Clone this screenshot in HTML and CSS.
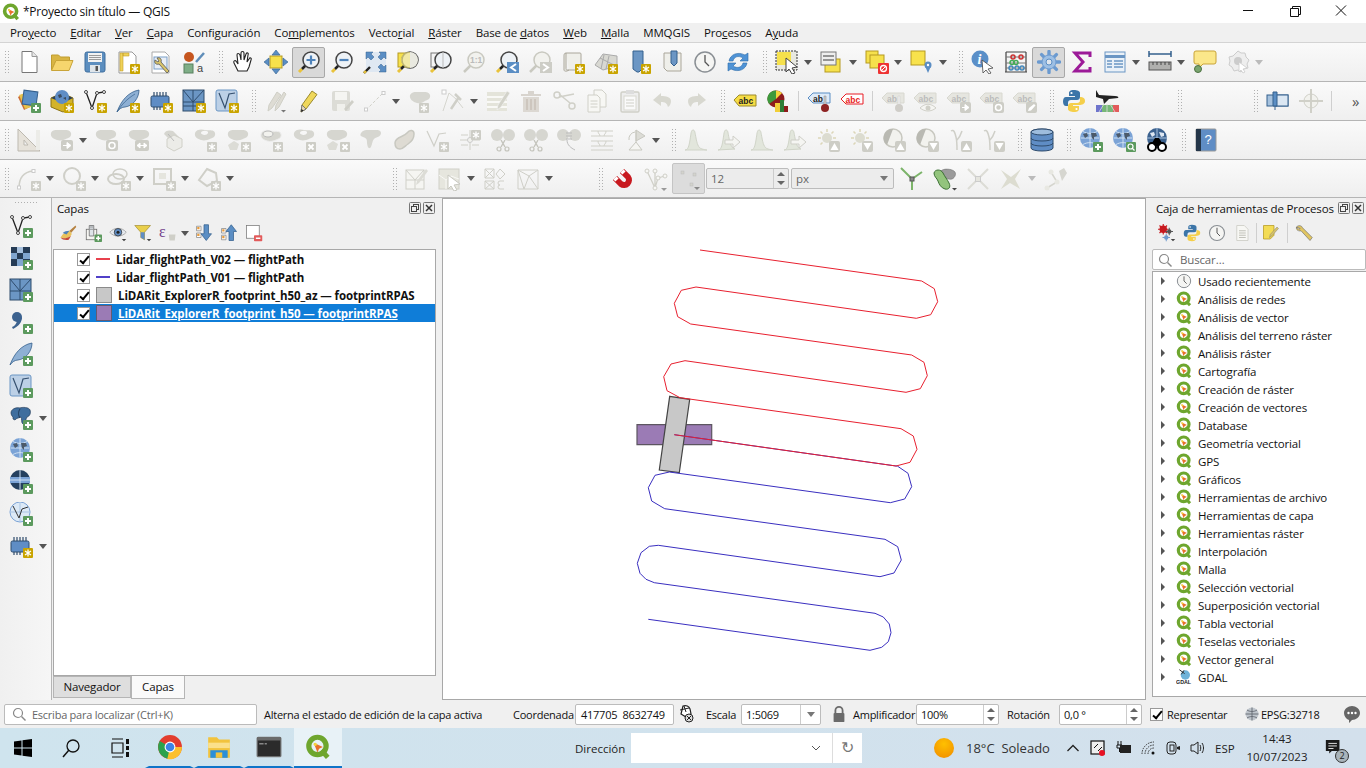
FILE: index.html
```html
<!DOCTYPE html>
<html lang="es">
<head>
    <meta charset="UTF-8">
    <title>*Proyecto sin título — QGIS</title>
    <link rel="stylesheet" href="styles.css">
</head>
<body>

<div class="titlebar">
    <svg class="logo"><use href="#q"/></svg>
    <span class="title">*Proyecto sin título — QGIS</span>
    <div class="winbtns">
        <svg viewBox="0 0 46 23"><path d="M17 10.5h10" stroke="#111"/></svg>
        <svg viewBox="0 0 46 23"><path d="M18.5 8.5h8v8h-8zM20.5 8.5v-2h8v8h-2" fill="none" stroke="#111"/></svg>
        <svg viewBox="0 0 46 23"><path d="M18 5.5l10 10M28 5.5l-10 10" stroke="#111"/></svg>
    </div>
</div>

<div class="menubar">
    <span>Pro<u>y</u>ecto</span>
    <span><u>E</u>ditar</span>
    <span><u>V</u>er</span>
    <span><u>C</u>apa</span>
    <span>Confi<u>g</u>uración</span>
    <span>Co<u>m</u>plementos</span>
    <span>Vecto<u>r</u>ial</span>
    <span><u>R</u>áster</span>
    <span>Base de <u>d</u>atos</span>
    <span><u>W</u>eb</span>
    <span><u>M</u>alla</span>
    <span>MMQGIS</span>
    <span>Pro<u>c</u>esos</span>
    <span>A<u>y</u>uda</span>
</div>

<div class="toolbar">
    <div class="hd first"></div>
    <div class="b"><svg class="ic"><use href="#new"/></svg></div>
    <div class="b"><svg class="ic"><use href="#open"/></svg></div>
    <div class="b"><svg class="ic"><use href="#save"/></svg></div>
    <div class="b"><svg class="ic"><use href="#saveas"/></svg></div>
    <div class="b"><svg class="ic"><use href="#props"/></svg></div>
    <div class="b"><svg class="ic" viewBox="0 0 24 24"><use href="#style"/><text class="it plain" x="15" y="22">a</text></svg></div>
    <div class="hd"></div>
    <div class="b"><svg class="ic"><use href="#hand"/></svg></div>
    <div class="b"><svg class="ic"><use href="#pansel"/></svg></div>
    <div class="b on"><svg class="ic"><use href="#zoomin"/></svg></div>
    <div class="b"><svg class="ic"><use href="#zoomout"/></svg></div>
    <div class="b"><svg class="ic"><use href="#zoomfull"/></svg></div>
    <div class="b"><svg class="ic"><use href="#zoomsel"/></svg></div>
    <div class="b"><svg class="ic"><use href="#zoomlayer"/></svg></div>
    <div class="b"><svg class="ic" viewBox="0 0 24 24"><use href="#zoomnat"/><text class="it g" x="8" y="13">1:1</text></svg></div>
    <div class="b"><svg class="ic"><use href="#zoomlast"/></svg></div>
    <div class="b"><svg class="ic"><use href="#zoomnext"/></svg></div>
    <div class="b"><svg class="ic"><use href="#mapview"/></svg></div>
    <div class="b"><svg class="ic"><use href="#map3d"/></svg></div>
    <div class="b"><svg class="ic"><use href="#booknew"/></svg></div>
    <div class="b"><svg class="ic"><use href="#books"/></svg></div>
    <div class="b"><svg class="ic"><use href="#clock"/></svg></div>
    <div class="b"><svg class="ic"><use href="#refresh"/></svg></div>
    <div class="hd"></div>
    <div class="b"><svg class="ic"><use href="#select"/></svg></div><div class="ar"></div>
    <div class="b"><svg class="ic"><use href="#selattr"/></svg></div><div class="ar"></div>
    <div class="b"><svg class="ic"><use href="#desel"/></svg></div><div class="ar"></div>
    <div class="b"><svg class="ic"><use href="#selpin"/></svg></div><div class="ar"></div>
    <div class="hd"></div>
    <div class="b"><svg class="ic" viewBox="0 0 24 24"><use href="#identify"/><text class="it info" x="6.500" y="14">i</text><use href="#cursor"/></svg></div>
    <div class="b"><svg class="ic"><use href="#abacus"/></svg></div>
    <div class="b on"><svg class="ic"><use href="#gear"/></svg></div>
    <div class="b"><svg class="ic"><use href="#sigma"/></svg></div>
    <div class="b"><svg class="ic"><use href="#table"/></svg></div><div class="ar"></div>
    <div class="b"><svg class="ic"><use href="#measure"/></svg></div><div class="ar"></div>
    <div class="b"><svg class="ic"><use href="#tip"/></svg></div>
    <div class="b"><svg class="ic"><use href="#action"/></svg></div><div class="ar off"></div>
</div>

<div class="toolbar">
    <div class="hd first"></div>
    <div class="b"><svg class="ic"><use href="#dsm"/></svg></div>
    <div class="b"><svg class="ic"><use href="#gpkg"/></svg></div>
    <div class="b"><svg class="ic"><use href="#vnew"/></svg></div>
    <div class="b"><svg class="ic"><use href="#feather"/></svg></div>
    <div class="b"><svg class="ic"><use href="#mesh"/></svg></div>
    <div class="b"><svg class="ic"><use href="#grid"/></svg></div>
    <div class="b"><svg class="ic"><use href="#virt"/></svg></div>
    <div class="hd"></div>
    <div class="b"><svg class="ic"><use href="#pencils"/></svg></div>
    <div class="b"><svg class="ic"><use href="#pencil"/></svg></div>
    <div class="b"><svg class="ic"><use href="#saveg"/></svg></div>
    <div class="b"><svg class="ic"><use href="#lineg"/></svg></div><div class="ar"></div>
    <div class="b"><svg class="ic"><use href="#blobstar"/></svg></div>
    <div class="b"><svg class="ic"><use href="#vtool"/></svg></div><div class="ar"></div>
    <div class="b"><svg class="ic"><use href="#tabedit"/></svg></div>
    <div class="b"><svg class="ic"><use href="#trash"/></svg></div>
    <div class="b"><svg class="ic"><use href="#cut"/></svg></div>
    <div class="b"><svg class="ic"><use href="#copy"/></svg></div>
    <div class="b"><svg class="ic"><use href="#paste"/></svg></div>
    <div class="b"><svg class="ic"><use href="#undo"/></svg></div>
    <div class="b"><svg class="ic"><use href="#redo"/></svg></div>
    <div class="hd"></div>
    <div class="b"><svg class="ic" viewBox="0 0 24 24"><use href="#abcy"/><text class="it" x="5.500" y="15">abc</text></svg></div>
    <div class="b"><svg class="ic"><use href="#pie"/></svg></div>
    <div class="sp"></div>
    <div class="b"><svg class="ic" viewBox="0 0 24 24"><use href="#abpin"/><text class="it" x="6" y="12.500">ab</text><use href="#pinbulb"/></svg></div>
    <div class="b"><svg class="ic" viewBox="0 0 24 24"><use href="#abcr"/><text class="it r" x="5.500" y="13.500">abc</text></svg></div>
    <div class="sp"></div>
    <div class="b"><svg class="ic" viewBox="0 0 24 24"><use href="#abg"/><text class="it g" x="6" y="12.500">ab</text><use href="#pinbulbg"/></svg></div>
    <div class="b"><svg class="ic" viewBox="0 0 24 24"><use href="#abcgrey"/><text class="it g" x="4.500" y="12.500">abc</text><use href="#abceye"/></svg></div>
    <div class="b"><svg class="ic" viewBox="0 0 24 24"><use href="#abcgrey"/><text class="it g" x="4.500" y="12.500">abc</text><use href="#abcmove"/></svg></div>
    <div class="b"><svg class="ic" viewBox="0 0 24 24"><use href="#abcgrey"/><text class="it g" x="4.500" y="12.500">abc</text><use href="#abcrot"/></svg></div>
    <div class="b"><svg class="ic" viewBox="0 0 24 24"><use href="#abcgrey"/><text class="it g" x="4.500" y="12.500">abc</text><use href="#abcedit"/></svg></div>
    <div class="hd"></div>
    <div class="b"><svg class="ic"><use href="#python"/></svg></div>
    <div class="b"><svg class="ic"><use href="#plane"/></svg></div>
    <div class="gap46"></div>
    <div class="hd"></div>
    <div class="gap60"></div>
    <div class="hd"></div>
    <div class="b"><svg class="ic"><use href="#pinlab"/></svg></div>
    <div class="b"><svg class="ic"><use href="#target"/></svg></div>
    <div class="sp"></div>
    <div class="more">»</div>
</div>

<div class="toolbar">
    <div class="hd first"></div>
    <div class="b"><svg class="ic"><use href="#ruler"/></svg></div>
    <div class="b"><svg class="ic"><use href="#blobarrow"/></svg></div><div class="ar"></div>
    <div class="b"><svg class="ic"><use href="#blobrot"/></svg></div>
    <div class="b"><svg class="ic"><use href="#blobsize"/></svg></div>
    <div class="b"><svg class="ic"><use href="#hexa"/></svg></div>
    <div class="b"><svg class="ic"><use href="#ringstar"/></svg></div>
    <div class="b"><svg class="ic"><use href="#twostar"/></svg></div>
    <div class="b"><svg class="ic"><use href="#ringstar2"/></svg></div>
    <div class="b"><svg class="ic"><use href="#ringx"/></svg></div>
    <div class="b"><svg class="ic"><use href="#twox"/></svg></div>
    <div class="b"><svg class="ic"><use href="#partial"/></svg></div>
    <div class="b"><svg class="ic"><use href="#smooth"/></svg></div>
    <div class="b"><svg class="ic"><use href="#vrot"/></svg></div>
    <div class="b"><svg class="ic"><use href="#offset"/></svg></div>
    <div class="b"><svg class="ic"><use href="#split"/></svg></div>
    <div class="b"><svg class="ic"><use href="#split"/></svg></div>
    <div class="b"><svg class="ic"><use href="#merge"/></svg></div>
    <div class="b"><svg class="ic"><use href="#lines"/></svg></div>
    <div class="b"><svg class="ic"><use href="#flag"/></svg></div><div class="ar"></div>
    <div class="hd"></div>
    <div class="b"><svg class="ic"><use href="#hist"/></svg></div>
    <div class="b"><svg class="ic"><use href="#histmove"/></svg></div>
    <div class="b"><svg class="ic"><use href="#hist"/></svg></div>
    <div class="b"><svg class="ic"><use href="#histmove"/></svg></div>
    <div class="b"><svg class="ic"><use href="#sunup"/></svg></div>
    <div class="b"><svg class="ic"><use href="#sundown"/></svg></div>
    <div class="b"><svg class="ic"><use href="#contup"/></svg></div>
    <div class="b"><svg class="ic"><use href="#contdown"/></svg></div>
    <div class="b"><svg class="ic"><use href="#gamup"/></svg></div>
    <div class="b"><svg class="ic"><use href="#gamdown"/></svg></div>
    <div class="hd"></div>
    <div class="b"><svg class="ic"><use href="#db"/></svg></div>
    <div class="hd"></div>
    <div class="b"><svg class="ic"><use href="#globeadd"/></svg></div>
    <div class="b"><svg class="ic"><use href="#globezoom"/></svg></div>
    <div class="b"><svg class="ic"><use href="#globebin"/></svg></div>
    <div class="hd"></div>
    <div class="b"><svg class="ic" viewBox="0 0 24 24"><use href="#help"/><text class="it q" x="10.500" y="16">?</text></svg></div>
</div>

<div class="toolbar last">
    <div class="hd first"></div>
    <div class="b"><svg class="ic"><use href="#arcstar"/></svg></div><div class="ar"></div>
    <div class="b"><svg class="ic"><use href="#circstar"/></svg></div><div class="ar"></div>
    <div class="b"><svg class="ic"><use href="#ellstar"/></svg></div><div class="ar"></div>
    <div class="b"><svg class="ic"><use href="#rectstar"/></svg></div><div class="ar"></div>
    <div class="b"><svg class="ic"><use href="#polystar"/></svg></div><div class="ar"></div>
    <div class="gap147"></div>
    <div class="hd"></div>
    <div class="b"><svg class="ic"><use href="#gridedit"/></svg></div>
    <div class="b"><svg class="ic"><use href="#gridsel"/></svg></div><div class="ar"></div>
    <div class="b"><svg class="ic"><use href="#quadsym"/></svg></div>
    <div class="b"><svg class="ic"><use href="#trimesh"/></svg></div><div class="ar"></div>
    <div class="gap34"></div>
    <div class="hd"></div>
    <div class="b"><svg class="ic"><use href="#magnet"/></svg></div>
    <div class="b"><svg class="ic"><use href="#snapv"/></svg></div>
    <div class="snapbtn"><svg class="ic"><use href="#dots"/></svg></div>
    <div class="spin w83 dim"><span class="val">12</span><span class="updown"></span></div>
    <div class="combo dim"><span class="val">px</span></div>
    <div class="b"><svg class="ic"><use href="#ygreen"/></svg></div>
    <div class="b"><svg class="ic"><use href="#blobgreen"/></svg></div>
    <div class="b"><svg class="ic"><use href="#crossg"/></svg></div>
    <div class="b"><svg class="ic"><use href="#crossg2"/></svg></div><div class="ar off"></div>
    <div class="b"><svg class="ic"><use href="#nodeg"/></svg></div>
</div>

<div class="main">
    <div class="lefttools">
        <div class="hdh"></div>
        <div class="lb"><svg class="ic"><use href="#vadd"/></svg></div>
        <div class="lb"><svg class="ic"><use href="#rasteradd"/></svg></div>
        <div class="lb"><svg class="ic"><use href="#gridadd"/></svg></div>
        <div class="lb"><svg class="ic"><use href="#commaadd"/></svg></div>
        <div class="lb"><svg class="ic"><use href="#featheradd"/></svg></div>
        <div class="lb"><svg class="ic"><use href="#virtadd"/></svg></div>
        <div class="lb"><svg class="ic"><use href="#pgadd"/></svg></div><div class="ar lar"></div>
        <div class="lb"><svg class="ic"><use href="#wmsadd"/></svg></div>
        <div class="lb"><svg class="ic"><use href="#wcsadd"/></svg></div>
        <div class="lb"><svg class="ic"><use href="#wfsadd"/></svg></div>
        <div class="lb"><svg class="ic"><use href="#mesh"/></svg></div><div class="ar lar"></div>
    </div>

    <div class="layers">
        <div class="dockhead">
            <span>Capas</span>
            <svg class="dockbtn"><use href="#dfloat"/></svg>
            <svg class="dockbtn"><use href="#dclose"/></svg>
        </div>
        <div class="docktools">
            <div class="sb"><svg class="ic"><use href="#brush"/></svg></div>
            <div class="sb"><svg class="ic"><use href="#groupadd"/></svg></div>
            <div class="sb"><svg class="ic"><use href="#eye"/></svg></div>
            <div class="sb"><svg class="ic"><use href="#filter"/></svg></div>
            <div class="sb"><svg class="ic" viewBox="0 0 24 24"><text class="it eps" x="0" y="17">ε</text><use href="#epsilon"/></svg></div><div class="ar sar"></div>
            <div class="sb"><svg class="ic"><use href="#expand"/></svg></div>
            <div class="sb"><svg class="ic"><use href="#collapse"/></svg></div>
            <div class="sb"><svg class="ic"><use href="#remove"/></svg></div>
        </div>
        <div class="tree">
            <div class="lrow"><span class="cb"></span><span class="sym line red"></span><span>Lidar_flightPath_V02 — flightPath</span></div>
            <div class="lrow"><span class="cb"></span><span class="sym line blue"></span><span>Lidar_flightPath_V01 — flightPath</span></div>
            <div class="lrow"><span class="cb"></span><span class="sym box grey"></span><span>LiDARit_ExplorerR_footprint_h50_az — footprintRPAS</span></div>
            <div class="lrow sel"><span class="cb"></span><span class="sym box purple"></span><span>LiDARit_ExplorerR_footprint_h50 — footprintRPAS</span></div>
        </div>
        <div class="tabs">
            <div class="tab">Navegador</div>
            <div class="tab cur">Capas</div>
        </div>
    </div>

    <div class="split"></div>

    <div class="canvas">
        <svg viewBox="443 199 702 500">
            <polygon points="637,424.7 711.7,424.7 711.7,444.7 637,444.7" fill="#9b7bb5" stroke="#5c5560" stroke-width="1.2"/>
            <polygon points="669.7,396.3 689.7,399.3 679.3,472.7 659.3,470" fill="#c8c8c8" stroke="#444" stroke-width="1.2"/>
            <polyline class="route" stroke="#3a2fc0" points="674.3,434.7 896,466 897.3,466 908,473.3 911.7,486.7 904.7,499 890.3,502.7 669.3,472 655,475.3 648.3,487.7 651.7,501 664.7,508.7 885,539.3 897.7,546.7 901.3,560 894,573 880,576.7 658.3,545.3 649.3,546.3 641,552.7 637.3,563.3 640,573.3 646,579.3 654.3,582.7 875,613.3 883.3,617 889.3,624 891,632.7 888.3,641.7 881.7,647.3 870,650.3 648.3,619.3"/>
            <polyline class="route" stroke="#e8202f" points="700,250 921.7,281 934.3,288.7 937.7,301.7 930.7,314.7 916.3,318.3 696,287 681.3,290.3 674.3,303.3 677.7,316.7 690.7,324 911.7,355 924,362.3 927.3,375.7 920.3,388.7 906,392.3 685,360.7 671,364 663.7,376.7 667,390.7 680,397.7 901,428.7 913.3,436 917,449.3 910,462.3 896,466 674.3,434.7"/>
        </svg>
    </div>

    <div class="split"></div>

    <div class="procs">
        <div class="dockhead">
            <span>Caja de herramientas de Procesos</span>
            <svg class="dockbtn"><use href="#dfloat"/></svg>
            <svg class="dockbtn"><use href="#dclose"/></svg>
        </div>
        <div class="docktools">
            <div class="sb"><svg class="ic"><use href="#models"/></svg></div>
            <div class="sb"><svg class="ic"><use href="#python"/></svg></div>
            <div class="sb"><svg class="ic"><use href="#clock"/></svg></div>
            <div class="sb"><svg class="ic"><use href="#doc"/></svg></div>
            <div class="sp narrow"></div>
            <div class="sb"><svg class="ic"><use href="#editflag"/></svg></div>
            <div class="sp"></div>
            <div class="sb"><svg class="ic"><use href="#wrench"/></svg></div>
        </div>
        <div class="search">
            <svg viewBox="0 0 14 14"><circle cx="6" cy="6" r="4.5" fill="none" stroke="#888" stroke-width="1.2"/><path d="M9.5 9.5l4 4" stroke="#888" stroke-width="1.4"/></svg>
            <span>Buscar…</span>
        </div>
        <div class="tree ptree">
            <div class="prow"><span class="tri"></span><svg class="pic"><use href="#clock"/></svg>Usado recientemente</div>
            <div class="prow"><span class="tri"></span><svg class="pic"><use href="#q"/></svg>Análisis de redes</div>
            <div class="prow"><span class="tri"></span><svg class="pic"><use href="#q"/></svg>Análisis de vector</div>
            <div class="prow"><span class="tri"></span><svg class="pic"><use href="#q"/></svg>Análisis del terreno ráster</div>
            <div class="prow"><span class="tri"></span><svg class="pic"><use href="#q"/></svg>Análisis ráster</div>
            <div class="prow"><span class="tri"></span><svg class="pic"><use href="#q"/></svg>Cartografía</div>
            <div class="prow"><span class="tri"></span><svg class="pic"><use href="#q"/></svg>Creación de ráster</div>
            <div class="prow"><span class="tri"></span><svg class="pic"><use href="#q"/></svg>Creación de vectores</div>
            <div class="prow"><span class="tri"></span><svg class="pic"><use href="#q"/></svg>Database</div>
            <div class="prow"><span class="tri"></span><svg class="pic"><use href="#q"/></svg>Geometría vectorial</div>
            <div class="prow"><span class="tri"></span><svg class="pic"><use href="#q"/></svg>GPS</div>
            <div class="prow"><span class="tri"></span><svg class="pic"><use href="#q"/></svg>Gráficos</div>
            <div class="prow"><span class="tri"></span><svg class="pic"><use href="#q"/></svg>Herramientas de archivo</div>
            <div class="prow"><span class="tri"></span><svg class="pic"><use href="#q"/></svg>Herramientas de capa</div>
            <div class="prow"><span class="tri"></span><svg class="pic"><use href="#q"/></svg>Herramientas ráster</div>
            <div class="prow"><span class="tri"></span><svg class="pic"><use href="#q"/></svg>Interpolación</div>
            <div class="prow"><span class="tri"></span><svg class="pic"><use href="#q"/></svg>Malla</div>
            <div class="prow"><span class="tri"></span><svg class="pic"><use href="#q"/></svg>Selección vectorial</div>
            <div class="prow"><span class="tri"></span><svg class="pic"><use href="#q"/></svg>Superposición vectorial</div>
            <div class="prow"><span class="tri"></span><svg class="pic"><use href="#q"/></svg>Tabla vectorial</div>
            <div class="prow"><span class="tri"></span><svg class="pic"><use href="#q"/></svg>Teselas vectoriales</div>
            <div class="prow"><span class="tri"></span><svg class="pic"><use href="#q"/></svg>Vector general</div>
            <div class="prow"><span class="tri"></span><svg class="pic" viewBox="0 0 24 24"><use href="#gdal"/><text class="it gd" x="0" y="22">GDAL</text></svg>GDAL</div>
        </div>
    </div>
</div>

<div class="statusbar">
    <div class="locator">
        <svg viewBox="0 0 14 14"><circle cx="6" cy="6" r="4.5" fill="none" stroke="#888" stroke-width="1.2"/><path d="M9.5 9.5l4 4" stroke="#888" stroke-width="1.4"/></svg>
        <span>Escriba para localizar (Ctrl+K)</span>
    </div>
    <span class="msg">Alterna el estado de edición de la capa activa</span>
    <span class="lab w62">Coordenada</span>
    <div class="field w99">417705&nbsp;&nbsp;8632749</div>
    <svg class="stic first-ic"><use href="#mouse"/></svg>
    <span class="lab w35">Escala</span>
    <div class="spin w80"><span class="val">1:5069</span><span class="drop"></span></div>
    <svg class="stic lock"><use href="#lock"/></svg>
    <span class="lab w63">Amplificador</span>
    <div class="spin w83"><span class="val">100%</span><span class="updown"></span></div>
    <span class="lab w52">Rotación</span>
    <div class="spin w83"><span class="val">0,0 °</span><span class="updown"></span></div>
    <span class="cb small"></span>
    <span class="lab w78">Representar</span>
    <svg class="stic globe"><use href="#wcsglobe"/></svg>
    <span class="lab w83px">EPSG:32718</span>
    <svg class="stic"><use href="#bubble"/></svg>
</div>

<div class="taskbar">
    <div class="tk w46"><svg class="tkic"><use href="#win"/></svg></div>
    <div class="tk w49"><svg class="tkic"><use href="#tsearch"/></svg></div>
    <div class="tk w50"><svg class="tkic"><use href="#taskview"/></svg></div>
    <div class="tk w49 run"><svg class="tkic big"><use href="#chrome"/></svg></div>
    <div class="tk w50 run"><svg class="tkic big"><use href="#explorer"/></svg></div>
    <div class="tk w50 run"><svg class="tkic big"><use href="#cmd"/></svg></div>
    <div class="tk w48 run active"><svg class="tkic big"><use href="#q"/></svg></div>
    <span class="addr">Dirección</span>
    <div class="addrbox">
        <svg class="chev" viewBox="0 0 10 6"><path d="M1 1l4 4 4-4" fill="none" stroke="#555"/></svg>
        <span class="addrgo">↻</span>
    </div>
    <div class="sun"></div>
    <span class="weather">18°C&nbsp;&nbsp;Soleado</span>
    <svg class="tray up" viewBox="0 0 14 14"><path d="M1.5 10l5.5-5.5 5.5 5.5" fill="none" stroke="#222" stroke-width="1.3"/></svg>
    <svg class="tray"><use href="#trayscreen"/></svg>
    <svg class="tray"><use href="#traybat"/></svg>
    <svg class="tray"><use href="#traywifi"/></svg>
    <svg class="tray"><use href="#traycam"/></svg>
    <svg class="tray"><use href="#traysnd"/></svg>
    <span class="lang">ESP</span>
    <div class="clock"><span>14:43</span><span>10/07/2023</span></div>
    <div class="notif"><svg viewBox="0 0 20 22"><path d="M1 1h16v13H8l-3 3v-3H1z" fill="#1a1a1a"/><path d="M4 5h10M4 8h10M4 11h6" stroke="#fff"/></svg><span class="count">2</span></div>
</div>

<svg class="sprite">
    <defs>
        <g id="bs"><rect x="14" y="14" width="10" height="10" rx="1" fill="#c9a400"/><path d="M19 15.5v7M16 17l6 4M22 17l-6 4" stroke="#fff" stroke-width="1.3"/></g>
        <g id="bg"><rect x="14" y="14" width="10" height="10" rx="1" fill="#cdcdc6"/><path d="M19 15.5v7M16 17l6 4M22 17l-6 4" stroke="#fff" stroke-width="1.3"/></g>
        <g id="bp"><rect x="14" y="14" width="10" height="10" rx="1" fill="#5c9a5e"/><path d="M19 16v6M16 19h6" stroke="#fff" stroke-width="2"/></g>
        <g id="bx"><rect x="14" y="14" width="10" height="10" rx="1" fill="#cdcdc6"/><path d="M16.500 16.500l5 5M21.500 16.500l-5 5" stroke="#fff" stroke-width="1.800"/></g>
        <path id="blob" d="M2 6c2-4 7-3 10-3s9-1 10 3-3 5-5 6-4 3-8 2-8-4-7-8z" fill="#d6d6d0"/>
        <g id="lensg"><path d="M2 22l7-7" stroke="#c9c9c0" stroke-width="2.500"/><circle cx="14" cy="10" r="8" fill="#f2f2ee" stroke="#c9c9c0" stroke-width="1.500"/></g>
        <g id="lens"><path d="M2 22l3-3" stroke="#e9c33b" stroke-width="3"/><path d="M5 19l4-4" stroke="#222" stroke-width="2.500"/><circle cx="14" cy="10" r="8" fill="#eef2f6" stroke="#444" stroke-width="1.500"/></g>
        <g id="globeb"><circle cx="11" cy="10" r="10" fill="#7ba3d6"/><path d="M1.500 10h19M11 0v20M4 3.500c4 2.500 10 2.500 14 0M4 16.500c4-2.500 10-2.500 14 0" stroke="#cfe0f2" fill="none"/><path d="M4 6l4-1 1 3-3 2zM12 5l5 0 1 3-3 1 0 3-2-2z" fill="#4c5a6a"/></g>
        <g id="blobwide"><path d="M1 5c1-4 7-3 10-3s9-1 10 3-3 5-5 6-6 2-9 1-7-3-6-7z" fill="#d6d6d0"/></g>
        <g id="sun"><circle cx="11" cy="10" r="5" fill="#dcdcd0"/><path d="M11 1v3M2 10h3M17 10h3M4.500 3.500l2 2M17.500 3.500l-2 2M4.500 16.500l2-2" stroke="#dcd6b8" stroke-width="1.500"/></g>
        <g id="cont"><circle cx="11" cy="10" r="9" fill="#f2f2ee" stroke="#c8c8c0" stroke-width="1.500"/><path d="M11 1a9 9 0 00-6 16z" fill="#b9b9b2"/></g>
        <g id="gam"><path d="M3 3c3-2 4 2 5 6s1 8 1 13M14 3c-1 3-3 7-5 9" fill="none" stroke="#cfcfc8" stroke-width="1.500"/></g>
    </defs>

    <symbol id="q" viewBox="0 0 24 24"><circle cx="11.500" cy="11" r="8" fill="none" stroke="#6ea62e" stroke-width="4.800"/><path d="M15 15l6 6.500" stroke="#6ea62e" stroke-width="4.500"/><path d="M8 8l8.500 4-3.500 1.500-1.500 3.500z" fill="#e8702a"/><circle cx="9.500" cy="9.500" r="1.500" fill="#f5d33c"/></symbol>

    <symbol id="new" viewBox="0 0 24 24"><path d="M5 1.500h10l5 5v16H5z" fill="#fff" stroke="#777"/><path d="M15 1.500v5h5" fill="#e8e8e8" stroke="#999"/></symbol>
    <symbol id="open" viewBox="0 0 24 24"><path d="M1.500 20V5h7l2 2h9v4H6z" fill="#d9b543" stroke="#c09d30"/><path d="M1.500 20.500h17.500l4-10H6z" fill="#f6d56d" stroke="#c9a438"/></symbol>
    <symbol id="save" viewBox="0 0 24 24"><rect x="2" y="2" width="20" height="20" rx="2" fill="#5c8ebf" stroke="#3f6e9e"/><rect x="5" y="3" width="14" height="9" fill="#f2f2f2"/><path d="M6 5.500h12M6 7.500h12M6 9.500h12" stroke="#9a9a9a"/><rect x="7" y="15" width="10" height="7" fill="#dfe5ea"/><rect x="12.500" y="16" width="2.500" height="5" fill="#555"/></symbol>
    <symbol id="saveas" viewBox="0 0 24 24"><path d="M3 2h13l4 4v17H3z" fill="#fff" stroke="#999"/><path d="M4 3h3v18H4zM7 3h6v3H7z" fill="#f0d258" stroke="#c29f2c" stroke-width=".6"/><use href="#bs"/></symbol>
    <symbol id="props" viewBox="0 0 24 24"><path d="M3 2h13l4 4v17H3z" fill="#fff" stroke="#aaa"/><rect x="5" y="7" width="13" height="12" fill="#e8eef6" stroke="#7b9fc8"/><path d="M8 8c3-1 5 1 4 4l8 9-2 2-8-9c-3 1-5-1-4-4l3 2 1-1z" fill="#d8c46a" stroke="#555" stroke-width=".8"/></symbol>
    <symbol id="style" viewBox="0 0 24 24"><circle cx="7" cy="7" r="5" fill="#c6561f"/><path d="M14 12l8-9" stroke="#5f8db9" stroke-width="2.500"/><rect x="2" y="14" width="9" height="9" fill="#7fae87" stroke="#59805f"/></symbol>
    <symbol id="hand" viewBox="0 0 24 24"><path d="M7 21l-4-8c-1-2 1-3 2-2l2 3-1-9c0-2 2-2 3 0l1 5 0-7c0-2 3-2 3 0v7l2-6c1-2 3-1 2 1l-1 7 2-3c1-2 3-1 2 1l-2 7-2 4z" fill="#fff" stroke="#222" stroke-width="1.100"/></symbol>
    <symbol id="pansel" viewBox="0 0 24 24"><rect x="6" y="6" width="12" height="12" fill="#f6e14c" stroke="#b59a20"/><path d="M12 0l4 5H8zM12 24l-4-5h8zM0 12l5-4v8zM24 12l-5 4V8z" fill="#5b8ec4" stroke="#34618f" stroke-width=".6"/></symbol>
    <symbol id="zoomin" viewBox="0 0 24 24"><use href="#lens"/><path d="M14 5.500v9M9.500 10h9" stroke="#4f83ba" stroke-width="2.200"/></symbol>
    <symbol id="zoomout" viewBox="0 0 24 24"><use href="#lens"/><path d="M9.500 10h9" stroke="#4f83ba" stroke-width="2.200"/></symbol>
    <symbol id="zoomfull" viewBox="0 0 24 24"><rect x="3" y="2" width="20" height="20" fill="#dfe8f2"/><path d="M3 2h7l-2 2 3 3-3 3-3-3-2 2zM23 2h-7l2 2-3 3 3 3 3-3 2 2zM23 22h-7l2-2-3-3 3-3 3 3 2-2z" fill="#5b8ec4" stroke="#34618f" stroke-width=".5"/><path d="M1 23l6-6" stroke="#222" stroke-width="2.400"/><path d="M1 23l2-2" stroke="#e9c33b" stroke-width="2.400"/></symbol>
    <symbol id="zoomsel" viewBox="0 0 24 24"><rect x="2" y="3" width="14" height="14" fill="#f6e14c" stroke="#b59a20"/><use href="#lens"/><path d="M14 2a8 8 0 010 16z" fill="#e9e9e0"/><path d="M5 11a8 8 0 0 0 9 7V2a8 8 0 0 0-9 9z" fill="#f2e685" fill-opacity=".7"/></symbol>
    <symbol id="zoomlayer" viewBox="0 0 24 24"><rect x="2" y="3" width="14" height="14" fill="#f4f4f4" stroke="#777"/><use href="#lens"/><path d="M14 2v16" stroke="#bbb"/></symbol>
    <symbol id="zoomnat" viewBox="0 0 24 24"><use href="#lensg"/></symbol>
    <symbol id="zoomlast" viewBox="0 0 24 24"><use href="#lens"/><rect x="12" y="12" width="12" height="11" fill="#5b8ec4"/><path d="M21 14l-5 3.500 5 3.500" fill="none" stroke="#fff" stroke-width="2"/></symbol>
    <symbol id="zoomnext" viewBox="0 0 24 24"><use href="#lensg"/><rect x="12" y="12" width="12" height="11" fill="#cdcdc6"/><path d="M15 14l5 3.500-5 3.500" fill="none" stroke="#fff" stroke-width="2"/></symbol>
    <symbol id="mapview" viewBox="0 0 24 24"><path d="M5 3h14a1 1 0 011 1v16H8c-3 0-3 0-3-2zM5 3c-2 0-2 2-2 3v14c0 1 2 2 5 0" fill="#efefea" stroke="#aaa69a"/><use href="#bs"/></symbol>
    <symbol id="map3d" viewBox="0 0 24 24"><path d="M1 15l8-11 14 2v10L9 20z" fill="#d8d8d2" stroke="#aaa"/><path d="M6 8l14 7M10 5l-3 14M15 6l-3 13" stroke="#aaa" fill="none"/><use href="#bs"/></symbol>
    <symbol id="booknew" viewBox="0 0 24 24"><path d="M6 1h10v17l-4 4H10l-4-3z" fill="#6b96c4" stroke="#35608d"/><use href="#bs"/></symbol>
    <symbol id="books" viewBox="0 0 24 24"><path d="M4 3h17v18H7l-3-3z" fill="#efefea" stroke="#aaa69a"/><path d="M11 1h6v12l-3 3-3-3z" fill="#6b96c4" stroke="#35608d"/></symbol>
    <symbol id="clock" viewBox="0 0 24 24"><circle cx="12" cy="12" r="10" fill="#f5f5f3" stroke="#8a8f94" stroke-width="1.500"/><path d="M12 5v7l4 4" fill="none" stroke="#555" stroke-width="1.300"/></symbol>
    <symbol id="refresh" viewBox="0 0 24 24"><path d="M3 11C4 5 11 1 19 5l3-2v8h-8l3-3C12 5 8 7 7 11zM21 13c-1 6-8 10-16 6l-3 2v-8h8l-3 3c5 3 9 1 10-3z" fill="#4f93d6" stroke="#2e6ca8" stroke-width=".6"/></symbol>
    <symbol id="select" viewBox="0 0 24 24"><rect x="1" y="1" width="21" height="19" fill="#e8e8e0" stroke="#333" stroke-dasharray="2 1"/><rect x="2" y="2" width="14" height="13" fill="#f6e14c"/><path d="M11 8l11 9-5 1 3 5-3 1-3-5-3 3z" fill="#fff" stroke="#444"/></symbol>
    <symbol id="selattr" viewBox="0 0 24 24"><rect x="5" y="9" width="15" height="13" fill="#f6e14c" stroke="#b59a20"/><rect x="1" y="2" width="15" height="13" fill="#eee" stroke="#777"/><path d="M3 6h11M3 10h11" stroke="#777" stroke-width="1.500"/></symbol>
    <symbol id="desel" viewBox="0 0 24 24"><rect x="1" y="1" width="12" height="12" fill="#f6e14c" stroke="#b59a20"/><rect x="5" y="5" width="14" height="13" fill="#f6e14c" stroke="#b59a20"/><rect x="13" y="13" width="11" height="11" rx="1" fill="#e33"/><circle cx="18.500" cy="18.500" r="3" fill="none" stroke="#fff" stroke-width="1.300"/><path d="M16 21l5-5" stroke="#fff"/></symbol>
    <symbol id="selpin" viewBox="0 0 24 24"><rect x="1" y="1" width="14" height="14" fill="#f8e24c" stroke="#b59a20"/><circle cx="18" cy="15" r="3.500" fill="#5b8ec4"/><path d="M15 16l3 7 3-7" fill="#5b8ec4"/><circle cx="18" cy="15" r="1.200" fill="#fff"/></symbol>
    <symbol id="identify" viewBox="0 0 24 24"><circle cx="9" cy="9" r="8.500" fill="#5a8fc8"/></symbol>
    <symbol id="cursor" viewBox="0 0 24 24"><path d="M11 10l11 8-5 1 3 4-2 1-3-4-3 3z" fill="#fff" stroke="#444" stroke-width=".8"/></symbol>
    <symbol id="abacus" viewBox="0 0 24 24"><path d="M1 22h22M2 2v20M22 2v20M2 2h20" fill="none" stroke="#444" stroke-width="1.200"/><path d="M2 7h20M2 13h20M2 18h20" stroke="#777"/><circle cx="9" cy="7" r="2" fill="none" stroke="#c33" stroke-width="1.500"/><circle cx="17" cy="7" r="2" fill="none" stroke="#c33" stroke-width="1.500"/><circle cx="8" cy="12.500" r="2" fill="none" stroke="#4a5" stroke-width="1.500"/><circle cx="12" cy="12.500" r="2" fill="none" stroke="#4a5" stroke-width="1.500"/><circle cx="7" cy="18" r="2" fill="none" stroke="#48b" stroke-width="1.500"/><circle cx="13" cy="18" r="2" fill="none" stroke="#48b" stroke-width="1.500"/><circle cx="18" cy="18" r="2" fill="none" stroke="#48b" stroke-width="1.500"/></symbol>
    <symbol id="gear" viewBox="0 0 24 24"><path d="M12 1.500v4M12 18.500v4M1.500 12h4M18.500 12h4M4.600 4.600l3 3M16.400 16.400l3 3M19.400 4.600l-3 3M7.600 16.400l-3 3" stroke="#6b9ad0" stroke-width="3.400" stroke-linecap="round"/><circle cx="12" cy="12" r="7" fill="#9dbfe4" stroke="#6b9ad0"/><circle cx="12" cy="12" r="3" fill="#dfe6ee" stroke="#5b8ec4"/></symbol>
    <symbol id="sigma" viewBox="0 0 24 24"><path d="M20 7V3H5l8 9-8 9h15v-4" fill="none" stroke="#9c1a98" stroke-width="3"/></symbol>
    <symbol id="table" viewBox="0 0 24 24"><rect x="2" y="2" width="20" height="20" fill="#eaf1f8" stroke="#6b96c4"/><path d="M2 6.500h20" stroke="#6b96c4" stroke-width="3"/><path d="M4 11h5M11 11h9M4 14h5M11 14h9M4 17h5M11 17h9" stroke="#6b96c4" stroke-width="1.400"/></symbol>
    <symbol id="measure" viewBox="0 0 24 24"><path d="M1 4h22M1 1v6M23 1v6" stroke="#35608d" stroke-width="1.500"/><rect x="1" y="12" width="22" height="8" fill="#b0b0ae" stroke="#555"/><path d="M5 12v3M9 12v3M13 12v3M17 12v3M21 12v3" stroke="#444"/></symbol>
    <symbol id="tip" viewBox="0 0 24 24"><path d="M3 1h18a2 2 0 012 2v9a2 2 0 01-2 2H10l-4 4v-4H3a2 2 0 01-2-2V3a2 2 0 012-2z" fill="#fbe78a" stroke="#c9a438"/><circle cx="5" cy="19" r="3.500" fill="#7aa56f" stroke="#4b7040"/></symbol>
    <symbol id="action" viewBox="0 0 24 24"><path d="M12 1l3 2 4 0 1 4 3 3-2 4 1 4-4 1-3 3-3-2-4 1-2-4-3-2 1-4-1-4 4-1z" fill="#eee" stroke="#ccc"/><circle cx="12" cy="11" r="4" fill="#ccc"/><path d="M13 12l8 6-4 1 2 3-2 1-2-3-2 2z" fill="#fff" stroke="#ccc" stroke-width=".8"/></symbol>

    <symbol id="dsm" viewBox="0 0 24 24"><path d="M1 8l8-5 6 14-8 4z" fill="#cc6d36"/><path d="M2 6l10-3 5 14-9 3z" fill="#e8c24a"/><rect x="6" y="2" width="14" height="14" fill="#5b8ec4" stroke="#35608d" transform="rotate(8 13 9)"/><use href="#bp"/></symbol>
    <symbol id="gpkg" viewBox="0 0 24 24"><path d="M1 9l11-5 11 5v10l-10 4-12-5z" fill="#d3b32a" stroke="#8b7314"/><path d="M1 9l12 5 10-5-11-5z" fill="#2f4157"/><circle cx="12" cy="8" r="7" fill="#5f8dc5"/><path d="M8 6l3-1 1 3-3 1zM13 9l3-1v3z" fill="#3b4a5c"/><use href="#bs"/></symbol>
    <symbol id="vnew" viewBox="0 0 24 24"><path d="M3 3l6 16 5-15 7-1" fill="none" stroke="#222" stroke-width="1.300"/><g fill="#fff" stroke="#444"><circle cx="3" cy="3" r="1.500"/><circle cx="9" cy="19" r="1.500"/><circle cx="14" cy="4" r="1.500"/><circle cx="21" cy="3" r="1.500"/></g><use href="#bs"/></symbol>
    <symbol id="feather" viewBox="0 0 24 24"><path d="M1 23C5 12 12 3 23 1c0 8-6 16-14 17-3 0-6 2-8 5z" fill="#8eb0d4" stroke="#35608d" stroke-width=".8"/><path d="M1 23c5-8 10-13 18-18" stroke="#35608d" fill="none" stroke-width=".7"/><use href="#bs"/></symbol>
    <symbol id="mesh" viewBox="0 0 24 24"><rect x="2" y="7" width="18" height="11" rx="1.500" fill="#5f8dc5" stroke="#2f4c6d"/><path d="M5 3v4M8 3v4M11 3v4M14 3v4M17 3v4M5 18v3M8 18v3M11 18v3" stroke="#2f4c6d" stroke-width="1.200"/><use href="#bs"/></symbol>
    <symbol id="grid" viewBox="0 0 24 24"><rect x="1" y="1" width="21" height="21" fill="#6b96c4" stroke="#2f4c6d"/><path d="M1 13h21M11 13v9M1 1l10 12M11 13L22 1M11 1v12" stroke="#2f4c6d" fill="none"/><path d="M1 17h10M11 17h11" stroke="#2f4c6d"/><use href="#bs"/></symbol>
    <symbol id="virt" viewBox="0 0 24 24"><rect x="1" y="1" width="21" height="21" rx="2" fill="#bcd0e6" stroke="#6b96c4"/><path d="M4 4l6 15 4-14 6-1" fill="none" stroke="#35506f" stroke-width="1.200"/><use href="#bs"/></symbol>
    <symbol id="pencils" viewBox="0 0 24 24"><path d="M4 22l1-6L13 3l4 3-9 13zM11 22l1-6 8-13 2 2-7 13z" fill="#dedcd4" stroke="#cfcfc6"/><path d="M17 21h5l-2.500 2.500z" fill="#777"/></symbol>
    <symbol id="pencil" viewBox="0 0 24 24"><path d="M4 23l1-7L15 2l5 3.500L9 20z" fill="#efd75a" stroke="#9b8a2e"/><path d="M4 23l1-7 4 4z" fill="#e9d9b5" stroke="#777"/><path d="M4 23l.5-3 2 1.500z" fill="#222"/></symbol>
    <symbol id="saveg" viewBox="0 0 24 24"><rect x="2" y="2" width="18" height="20" rx="2" fill="#dcdcd6"/><rect x="5" y="3" width="12" height="8" fill="#f5f5f2"/><rect x="7" y="15" width="8" height="7" fill="#f0f0ec"/><path d="M14 20l8-9 2 2-8 9z" fill="#cfcfc8"/></symbol>
    <symbol id="lineg" viewBox="0 0 24 24"><path d="M3 21L20 4" stroke="#d0d0c8" stroke-dasharray="3 2"/><rect x="1.500" y="19" width="3" height="3" fill="#fff" stroke="#ccc"/><rect x="19" y="2.500" width="3" height="3" fill="#fff" stroke="#ccc"/></symbol>
    <symbol id="blobstar" viewBox="0 0 24 24"><use href="#blob"/><use href="#bg" x="-3"/></symbol>
    <symbol id="vtool" viewBox="0 0 24 24"><path d="M2 22l6-18 7 6 7 9" fill="none" stroke="#d5d5ce"/><rect x="1" y="1" width="4" height="4" fill="#fff" stroke="#ccc"/><path d="M10 20l8-12M14 5l6 6" stroke="#cfcfc8" stroke-width="2.500"/></symbol>
    <symbol id="tabedit" viewBox="0 0 24 24"><rect x="1" y="3" width="20" height="19" fill="#e4e4da"/><path d="M1 8h20M1 13h20M1 18h20" stroke="#fff" stroke-width="1.300"/><path d="M11 21l1-5L21 2l3 2-9 14z" fill="#d3d3ca" stroke="#f5f5f5" stroke-width=".6"/></symbol>
    <symbol id="trash" viewBox="0 0 24 24"><path d="M2 5h20v2H2zM9 2h6v3H9z" fill="#d8d4ce"/><path d="M4 8h16v15H4z" fill="#dcd8d2"/><path d="M8 10v11M12 10v11M16 10v11" stroke="#c8c0b8" stroke-width="1.500"/></symbol>
    <symbol id="cut" viewBox="0 0 24 24"><circle cx="5" cy="6" r="3" fill="none" stroke="#d0d0c8" stroke-width="1.500"/><circle cx="20" cy="17" r="3" fill="none" stroke="#d0d0c8" stroke-width="1.500"/><path d="M7 8l15-3M18 14L7 5" stroke="#d0d0c8" stroke-width="1.500"/></symbol>
    <symbol id="copy" viewBox="0 0 24 24"><path d="M9 1h8l4 4v13H9z" fill="#f7f7f4" stroke="#d0d0c8"/><path d="M3 6h9l3 3v14H3z" fill="#f7f7f4" stroke="#d0d0c8"/><path d="M5.500 12h7M5.500 15h7M5.500 18h7" stroke="#d0d0c8"/></symbol>
    <symbol id="doc" viewBox="0 0 24 24"><path d="M5 2h10l5 5v15H5z" fill="#f7f7f4" stroke="#c8c8c0"/><path d="M8 9h9M8 12h9M8 15h9M8 18h9" stroke="#c0c0b8" stroke-width="1.300"/></symbol>
    <symbol id="paste" viewBox="0 0 24 24"><rect x="3" y="3" width="18" height="20" rx="1.500" fill="#eee" stroke="#d0d0c8" stroke-width="1.500"/><path d="M8 1h8v4H8z" fill="#ddd"/><rect x="6" y="7" width="12" height="14" fill="#fafafa" stroke="#d8d8d0"/><path d="M8 11h8M8 14h8M8 17h8" stroke="#d0d0c8"/></symbol>
    <symbol id="undo" viewBox="0 0 24 24"><path d="M10 4L2 11l8 6v-4c4 0 6 1 7 5 2-1 3-4 3-6 0-4-5-5-10-5z" fill="#d8d8d0"/></symbol>
    <symbol id="redo" viewBox="0 0 24 24"><path d="M14 4l8 7-8 6v-4c-4 0-6 1-7 5-2-1-3-4-3-6 0-4 5-5 10-5z" fill="#d8d8d0"/></symbol>
    <symbol id="abcy" viewBox="0 0 24 24"><path d="M1 11l5-5h17v11H6z" fill="#f6dd45" stroke="#9b8a2e"/></symbol>
    <symbol id="pie" viewBox="0 0 24 24"><circle cx="10" cy="10" r="8.500" fill="#8e1b1b"/><path d="M10 10V1.500A8.500 8.500 0 003 15z" fill="#3c9a3c"/><path d="M10 10V1.500a8.500 8.500 0 016 2.500z" fill="#f3d53c"/><rect x="9" y="14" width="5" height="9" fill="#f1cf38"/><rect x="14" y="11" width="4" height="12" fill="#2f7d37"/><rect x="18" y="17" width="4" height="6" fill="#8e1b1b"/></symbol>
    <symbol id="abpin" viewBox="0 0 24 24"><path d="M1 9l5-5h17v10H6z" fill="#ddeaf8" stroke="#5b8ec4"/></symbol>
    <symbol id="pinbulb" viewBox="0 0 24 24"><path d="M17 7h2v9h-2z" fill="#ccc" stroke="#888" stroke-width=".5"/><circle cx="18" cy="19" r="4" fill="#8e2323"/></symbol>
    <symbol id="abcr" viewBox="0 0 24 24"><path d="M1 10l5-5h17v10H6z" fill="#fff" stroke="#e81d25"/></symbol>
    <symbol id="abg" viewBox="0 0 24 24"><path d="M1 9l5-5h17v10H6z" fill="#e6e6e0" stroke="#d8d8d0"/></symbol>
    <symbol id="pinbulbg" viewBox="0 0 24 24"><path d="M17 7h2v9h-2z" fill="#eee" stroke="#ccc" stroke-width=".5"/><circle cx="18" cy="19" r="4" fill="#cfcdc8"/></symbol>
    <symbol id="abcgrey" viewBox="0 0 24 24"><path d="M0 9l5-5h17v10H5z" fill="#e6e6e0" stroke="#d8d8d0"/></symbol>
    <symbol id="abceye" viewBox="0 0 24 24"><path d="M6 19c5-5 11-5 16 0-5 4-11 4-16 0z" fill="#f5f5f2" stroke="#d0d0c8"/><circle cx="14" cy="19" r="2.500" fill="#d0d0c8"/></symbol>
    <symbol id="abcmove" viewBox="0 0 24 24"><rect x="13" y="13" width="11" height="11" rx="2" fill="#cdcdc6"/><path d="M15 18.500h3v-3l4 3-4 3v-3z" fill="#fff" stroke="#fff"/></symbol>
    <symbol id="abcrot" viewBox="0 0 24 24"><rect x="13" y="13" width="11" height="11" rx="2" fill="#cdcdc6"/><circle cx="18.500" cy="18.500" r="3" fill="none" stroke="#fff" stroke-width="1.500"/></symbol>
    <symbol id="abcedit" viewBox="0 0 24 24"><rect x="13" y="13" width="11" height="11" rx="2" fill="#cdcdc6"/><path d="M15 22l1-3 5-4 1.500 1.500-4.500 5z" fill="#fff"/></symbol>
    <symbol id="python" viewBox="0 0 24 24"><path d="M12 1C8 1 7 2.500 7 4v3h6v1H4C2 8 1 10 1 12.500S2 17 4 17h2v-3c0-2 1-3 3-3h6c1.500 0 3-1 3-3V4c0-2-3-3-6-3z" fill="#3c75a8"/><path d="M12 23c4 0 5-1.500 5-3v-3h-6v-1h6c3 0 6-1 6-4s-2-4-5-4v3c0 2-1 3-3 3H9c-1.500 0-3 1-3 3v3c0 2 3 3 6 3z" fill="#f5cf4a"/><circle cx="9.500" cy="4" r="1.100" fill="#fff"/><circle cx="14.500" cy="20" r="1.100" fill="#fff"/></symbol>
    <symbol id="plane" viewBox="0 0 24 24"><rect x="1" y="16" width="6" height="7" fill="#6e74cc"/><rect x="7" y="16" width="11" height="7" fill="#77b778"/><rect x="18" y="16" width="6" height="7" fill="#e25b5b"/><path d="M9 15l-5 8M15 15l5 8M12 15v8" stroke="#ddd" stroke-width=".8"/><path d="M1 1l3 5 16 1c3 0 4 1 3 2l-9 1-5 5-1-5-7-2z" fill="#222"/></symbol>
    <symbol id="pinlab" viewBox="0 0 24 24"><rect x="1" y="6" width="21" height="11" fill="#a6c2de" stroke="#35608d"/><rect x="10" y="6" width="12" height="11" fill="#dbe7f3" stroke="#35608d"/><path d="M7 3h4v14H7zM9 17v4" fill="#5b8ec4" stroke="#35608d"/></symbol>
    <symbol id="target" viewBox="0 0 24 24"><circle cx="12" cy="12" r="7" fill="#f2f2ee" stroke="#d0d0c8"/><path d="M12 0v24M0 12h24" stroke="#d0d0c8" stroke-width="2"/></symbol>

    <symbol id="ruler" viewBox="0 0 24 24"><path d="M1 1l22 22H1zM7 12l4 5H7z" fill="#e6e2da" fill-rule="evenodd" stroke="#bdb9b0"/><path d="M23 2v20h-4V2z" fill="#ecece8"/></symbol>
    <symbol id="blobarrow" viewBox="0 0 24 24"><use href="#blobwide"/><rect x="11" y="12" width="12" height="11" rx="2" fill="#cdcdc6"/><path d="M13 17.500h4v-3l4 3-4 3v-3z" fill="#fff" stroke="#fff"/></symbol>
    <symbol id="blobrot" viewBox="0 0 24 24"><use href="#blobwide"/><rect x="11" y="12" width="12" height="11" rx="2" fill="#cdcdc6"/><circle cx="17" cy="17.500" r="3" fill="none" stroke="#fff" stroke-width="1.500"/></symbol>
    <symbol id="blobsize" viewBox="0 0 24 24"><use href="#blobwide"/><rect x="7" y="12" width="14" height="11" rx="2" fill="#cdcdc6"/><path d="M9 17.500h10M9 17.500l3-2.500v5zM19 17.500l-3-2.500v5z" fill="#fff" stroke="#fff"/></symbol>
    <symbol id="hexa" viewBox="0 0 24 24"><path d="M3 6c1-4 6-4 9-3l6 6-5 4-5-2z" fill="#d6d6d0"/><path d="M13 7l8 4v8l-8 4-7-4v-8z" fill="#ecece8" stroke="#d0d0c8"/><path d="M7 6l6 7" stroke="#bbb"/></symbol>
    <symbol id="ringstar" viewBox="0 0 24 24"><path d="M1 5c1-4 7-4 10-3s9-1 10 3-3 5-5 6-6 2-9 1-7-3-6-7zM7 5c0 2 6 3 7 0s-7-3-7 0z" fill="#d6d6d0" fill-rule="evenodd"/><use href="#bg" x="-1"/></symbol>
    <symbol id="twostar" viewBox="0 0 24 24"><use href="#blobwide"/><path d="M1 17l6-4 5 3-2 6H3z" fill="#dcdcd6"/><use href="#bg"/></symbol>
    <symbol id="ringstar2" viewBox="0 0 24 24"><path d="M1 6c1-4 7-4 10-3s9-1 10 3-3 5-5 6-6 2-9 1-7-3-6-7z" fill="#d6d6d0" stroke="#eee"/><ellipse cx="8" cy="6" rx="5" ry="3" fill="#f2f2ee" stroke="#bbb"/><use href="#bg" x="-1"/></symbol>
    <symbol id="ringx" viewBox="0 0 24 24"><path d="M1 5c1-4 7-4 10-3s9-1 10 3-3 5-5 6-6 2-9 1-7-3-6-7zM7 5c0 2 6 3 7 0s-7-3-7 0z" fill="#d6d6d0" fill-rule="evenodd"/><use href="#bx" x="-1"/></symbol>
    <symbol id="twox" viewBox="0 0 24 24"><use href="#blobwide"/><path d="M1 17l6-4 5 3-2 6H3z" fill="#dcdcd6"/><use href="#bx"/></symbol>
    <symbol id="partial" viewBox="0 0 24 24"><path d="M2 5c2-4 8-3 11-3s9-1 9 3-5 4-7 6-2 8-4 9-3-3-3-6-1-4-4-5-3-2-2-4z" fill="#d6d6d0"/></symbol>
    <symbol id="smooth" viewBox="0 0 24 24"><path d="M3 15c0-6 9-6 12-10s7-3 7 1-3 8-6 10-5 5-8 5-5-2-5-6z" fill="#dedbd3" stroke="#c8c8c0" stroke-width="1.500"/></symbol>
    <symbol id="vrot" viewBox="0 0 24 24"><path d="M2 3l7 15 5-12 7-1" fill="none" stroke="#cfcfc8" stroke-width="1.200"/><use href="#bg"/></symbol>
    <symbol id="offset" viewBox="0 0 24 24"><path d="M12 2v20M2 12h20M3 7h7M14 7h7M3 17h7M14 17h7" stroke="#d0d0c8" fill="none"/><circle cx="12" cy="12" r="2.500" fill="#f2f2ee" stroke="#ccc"/><use href="#bg" y="-12" x="-1"/></symbol>
    <symbol id="split" viewBox="0 0 24 24"><ellipse cx="6" cy="7" rx="6" ry="6" fill="#d6d6d0"/><ellipse cx="18" cy="7" rx="6" ry="6" fill="#d6d6d0"/><path d="M10 12l4 7M14 12l-4 7" stroke="#c4c4bc" stroke-width="1.400"/><circle cx="8" cy="21" r="2" fill="none" stroke="#c4c4bc" stroke-width="1.200"/><circle cx="16" cy="21" r="2" fill="none" stroke="#c4c4bc" stroke-width="1.200"/></symbol>
    <symbol id="merge" viewBox="0 0 24 24"><ellipse cx="6" cy="7" rx="6" ry="6" fill="#d6d6d0"/><ellipse cx="18" cy="7" rx="6" ry="6" fill="#d6d6d0"/><path d="M9 5h6M9 8h6M9 11h6M10 12c0 5 4 8 8 10" stroke="#bbb" fill="none"/></symbol>
    <symbol id="lines" viewBox="0 0 24 24"><path d="M1 3h22M1 8h22M1 13h22M1 18h22M1 22h22M8 3c0 3 2 3 2 5M16 3c0 3-2 3-2 5M8 13c0 3 2 3 2 5M16 13c0 3-2 3-2 5" stroke="#d0d0c8" fill="none"/></symbol>
    <symbol id="flag" viewBox="0 0 24 24"><path d="M13 2v12M13 2l9 6-9 5z" fill="#dcdcd6" stroke="#c8c8c0"/><path d="M6 22l7-8 6 8z" fill="#f5f5f2" stroke="#c8c8c0"/><path d="M6 12a7 7 0 016-8" fill="none" stroke="#c8c8c0"/></symbol>
    <symbol id="hist" viewBox="0 0 24 24"><path d="M1 22c3 0 4-4 5-10s1-10 3-10 2 3 3 8 2 10 6 11 5 1 5 1z" fill="#e2e6dc" stroke="#d0d4c8"/></symbol>
    <symbol id="histmove" viewBox="0 0 24 24"><path d="M1 22c3 0 4-4 5-10s1-10 3-10 2 3 3 8 2 10 6 11z" fill="#e2e6dc" stroke="#d0d4c8"/><path d="M8 12h8V8l7 6-7 6v-4H8z" fill="#f5f5f2" stroke="#cfcfc8"/></symbol>
    <symbol id="sunup" viewBox="0 0 24 24"><use href="#sun"/><rect x="13" y="13" width="11" height="11" rx="2" fill="#cdcdc6"/><path d="M18.500 15l4 7h-8z" fill="#fff"/></symbol>
    <symbol id="sundown" viewBox="0 0 24 24"><use href="#sun"/><rect x="13" y="13" width="11" height="11" rx="2" fill="#cdcdc6"/><path d="M18.500 22l4-7h-8z" fill="#fff"/></symbol>
    <symbol id="contup" viewBox="0 0 24 24"><use href="#cont"/><rect x="13" y="13" width="11" height="11" rx="2" fill="#cdcdc6"/><path d="M18.500 15l4 7h-8z" fill="#fff"/></symbol>
    <symbol id="contdown" viewBox="0 0 24 24"><use href="#cont"/><rect x="13" y="13" width="11" height="11" rx="2" fill="#cdcdc6"/><path d="M18.500 22l4-7h-8z" fill="#fff"/></symbol>
    <symbol id="gamup" viewBox="0 0 24 24"><use href="#gam"/><rect x="13" y="13" width="11" height="11" rx="2" fill="#cdcdc6"/><path d="M18.500 15l4 7h-8z" fill="#fff"/></symbol>
    <symbol id="gamdown" viewBox="0 0 24 24"><use href="#gam"/><rect x="13" y="13" width="11" height="11" rx="2" fill="#cdcdc6"/><path d="M18.500 22l4-7h-8z" fill="#fff"/></symbol>
    <symbol id="db" viewBox="0 0 24 24"><path d="M1 4c0-4 22-4 22 0v16c0 4-22 4-22 0z" fill="#5f8dc5" stroke="#2f4c6d"/><ellipse cx="12" cy="4" rx="11" ry="3" fill="#9dbcdd" stroke="#2f4c6d"/><path d="M1 10c0 4 22 4 22 0M1 15c0 4 22 4 22 0" fill="none" stroke="#2f4c6d"/></symbol>
    <symbol id="globeadd" viewBox="0 0 24 24"><use href="#globeb"/><use href="#bp"/></symbol>
    <symbol id="globezoom" viewBox="0 0 24 24"><use href="#globeb"/><rect x="14" y="14" width="10" height="10" rx="1" fill="#5c9a5e"/><circle cx="18.500" cy="18.500" r="2.500" fill="none" stroke="#fff" stroke-width="1.200"/><path d="M20 20l2.500 2.500" stroke="#fff" stroke-width="1.200"/></symbol>
    <symbol id="globebin" viewBox="0 0 24 24"><circle cx="12" cy="10" r="10" fill="#3c628f"/><path d="M2 10h20M12 0v20" stroke="#aac4e0"/><path d="M5 5l4-1 1 3-3 2zM14 4l5 1 0 3-3 1z" fill="#dfe8f2"/><circle cx="7" cy="19" r="4" fill="#fff" stroke="#000" stroke-width="2"/><circle cx="17" cy="19" r="4" fill="#fff" stroke="#000" stroke-width="2"/><path d="M7 15l3-5h4l3 5-3 3h-4z" fill="#000"/></symbol>
    <symbol id="help" viewBox="0 0 24 24"><rect x="2" y="1" width="20" height="22" rx="1" fill="#5f8dc5" stroke="#999"/><rect x="2" y="1" width="5" height="22" fill="#243649"/></symbol>

    <symbol id="arcstar" viewBox="0 0 24 24"><path d="M2 21c0-9 4-16 14-17" fill="none" stroke="#cfcfc8" stroke-width="1.500"/><rect x=".5" y="19" width="3" height="3" fill="#fff" stroke="#ccc"/><rect x="15" y="2.500" width="3" height="3" fill="#fff" stroke="#ccc"/><use href="#bg"/></symbol>
    <symbol id="circstar" viewBox="0 0 24 24"><circle cx="10" cy="9" r="8" fill="none" stroke="#cfcfc8" stroke-width="2"/><use href="#bg"/></symbol>
    <symbol id="ellstar" viewBox="0 0 24 24"><ellipse cx="9" cy="12" rx="8" ry="5" fill="none" stroke="#cfcfc8" stroke-width="2"/><ellipse cx="13" cy="7" rx="7" ry="5" fill="none" stroke="#cfcfc8" stroke-width="1.500"/><use href="#bg"/></symbol>
    <symbol id="rectstar" viewBox="0 0 24 24"><rect x="2" y="2" width="17" height="15" fill="none" stroke="#cfcfc8" stroke-width="2"/><rect x="7" y="6" width="7" height="6" fill="#e5e5de"/><use href="#bg"/></symbol>
    <symbol id="polystar" viewBox="0 0 24 24"><path d="M10 2l9 4 1 8-10 5-8-6z" fill="none" stroke="#cfcfc8" stroke-width="2"/><use href="#bg"/></symbol>
    <symbol id="gridedit" viewBox="0 0 24 24"><rect x="1" y="3" width="18" height="19" fill="#f5f5f2" stroke="#cfcfc8"/><path d="M1 13h18M10 13v9M1 3l9 10L19 3" fill="none" stroke="#cfcfc8"/><path d="M11 18l1-4 9-12 2 2-9 12z" fill="#dcdcd6"/></symbol>
    <symbol id="gridsel" viewBox="0 0 24 24"><rect x="1" y="2" width="20" height="20" fill="#e6e6de" stroke="#d0d0c8"/><path d="M1 8l7 5 5-4 8 3M8 13v9M13 9l3 13" stroke="#f8f8f5" fill="none"/><path d="M10 8l12 9-6 1 3 5-3 1-3-5-3 3z" fill="#fff" stroke="#c8c8c0"/></symbol>
    <symbol id="quadsym" viewBox="0 0 24 24"><path d="M2 2h9v9H2zM2 2l9 9M11 2l-9 9M2 14h9v8H2zM2 14l9 8M11 14l-9 8M17 2l5 5-5 5-4-5zM21 14h-4a2 2 0 000 4 2 2 0 000 4h4" fill="none" stroke="#cfcfc8"/></symbol>
    <symbol id="trimesh" viewBox="0 0 24 24"><path d="M2 3h20v19H2zM2 3l6 19 5-13 9 13M13 9l9-6M2 3l11 6" fill="none" stroke="#cfcfc8"/></symbol>
    <symbol id="magnet" viewBox="0 0 24 24"><path d="M4 11l6 6a5 5 0 007-7l-6-6" fill="none" stroke="#c8191f" stroke-width="6"/><path d="M4 11l2 2M11 4l2 2" stroke="#fff" stroke-width="4.500"/></symbol>
    <symbol id="snapv" viewBox="0 0 24 24"><path d="M3 4l8 17 3-10 7-2M11 21V3" fill="none" stroke="#d0d0c8" stroke-width="1.300"/><g fill="#f7f7f4" stroke="#cfcfc8"><circle cx="3" cy="4" r="2"/><circle cx="11" cy="4" r="2"/><circle cx="14" cy="11" r="2"/><circle cx="21" cy="9" r="2"/><circle cx="11" cy="21" r="2"/></g><path d="M17 21h6l-3 3z" fill="#999"/></symbol>
    <symbol id="dots" viewBox="0 0 24 24"><g fill="#d3d3cd" stroke="#bbb" stroke-width=".5"><rect x="4" y="4" width="3" height="3"/><rect x="16" y="6" width="3" height="3"/><rect x="13" y="16" width="3" height="3"/></g><path d="M17 20h6l-3 3z" fill="#888"/></symbol>
    <symbol id="ygreen" viewBox="0 0 24 24"><path d="M1 1l11 11 10-7M12 12v11" fill="none" stroke="#7cb46a" stroke-width="2"/><rect x="10" y="10" width="4" height="4" fill="#888" stroke="#555"/></symbol>
    <symbol id="blobgreen" viewBox="0 0 24 24"><path d="M8 4c3-3 10-2 13 0s1 7-2 8-7-1-9-3z" fill="#9b9b9b" stroke="#666" stroke-width=".5"/><path d="M1 6c1-4 7-4 9 0s4 6 6 10 0 7-4 6-6-5-7-8-4-4-4-8z" fill="#93c47d" stroke="#3c7035"/><path d="M19 21h5l-2.500 2.500z" fill="#444"/></symbol>
    <symbol id="crossg" viewBox="0 0 24 24"><path d="M2 2l20 20M22 2L2 22" stroke="#dcdcd6" stroke-width="2"/><rect x="9.500" y="9.500" width="5" height="5" fill="#e5e5de" stroke="#ccc"/></symbol>
    <symbol id="crossg2" viewBox="0 0 24 24"><path d="M2 3l10 7L22 2l-6 10 5 10-10-6-9 6 6-10z" fill="#dcdcd0"/></symbol>
    <symbol id="nodeg" viewBox="0 0 24 24"><path d="M3 21l10-6-6-10" fill="none" stroke="#d5d5ce" stroke-width="1.500"/><circle cx="3" cy="21" r="2.500" fill="#e8e8e2"/><circle cx="13" cy="15" r="2.500" fill="#e8e8e2"/><circle cx="7" cy="5" r="2.500" fill="#e8e8e2"/><path d="M15 4l5-3 3 5-5 8z" fill="#d6d6d0"/></symbol>

    <symbol id="vadd" viewBox="0 0 24 24"><path d="M3 3l6 16 5-15 7-1" fill="none" stroke="#222" stroke-width="1.300"/><g fill="#fff" stroke="#444"><circle cx="3" cy="3" r="1.500"/><circle cx="9" cy="19" r="1.500"/><circle cx="14" cy="4" r="1.500"/><circle cx="21" cy="3" r="1.500"/></g><use href="#bp"/></symbol>
    <symbol id="rasteradd" viewBox="0 0 24 24"><rect x="2" y="1" width="19" height="19" fill="#7fa5cf"/><path d="M2 1h6v6H2zM14 1h7v6h-7zM8 7h6v6H8zM14 13h7v7h-7zM2 13h6v7H2z" fill="#253b55"/><path d="M8 1h6v6H8z" fill="#a7c1de"/><use href="#bp"/></symbol>
    <symbol id="gridadd" viewBox="0 0 24 24"><rect x="1" y="1" width="21" height="21" fill="#6b96c4" stroke="#2f4c6d"/><path d="M1 13h21M11 13v9M1 1l10 12M11 13L22 1M11 1v12" stroke="#2f4c6d" fill="none"/><use href="#bp"/></symbol>
    <symbol id="commaadd" viewBox="0 0 24 24"><circle cx="8" cy="7" r="5" fill="#3c628f"/><path d="M13 7c0 5-3 9-9 12l-1-2c3-1 5-4 5-7z" fill="#3c628f"/><use href="#bp"/></symbol>
    <symbol id="featheradd" viewBox="0 0 24 24"><path d="M1 23C5 12 12 3 23 1c0 8-6 16-14 17-3 0-6 2-8 5z" fill="#8eb0d4" stroke="#35608d" stroke-width=".8"/><use href="#bp"/></symbol>
    <symbol id="virtadd" viewBox="0 0 24 24"><rect x="1" y="1" width="21" height="21" rx="2" fill="#bcd0e6" stroke="#6b96c4"/><path d="M4 4l6 15 4-14 6-1" fill="none" stroke="#35506f" stroke-width="1.200"/><use href="#bp"/></symbol>
    <symbol id="pgadd" viewBox="0 0 24 24"><path d="M2 7c0-4 5-6 9-5 2-1 9-1 10 2s0 6-3 7l-1 2c0 3-1 6-3 5s-1-6-2-7c-2 1-5 1-6 3l-2-1c1-2-2-3-2-6z" fill="#3f6e9e" stroke="#1f3a57" stroke-width=".7"/><path d="M11 3c-2 3-2 6 0 9" fill="none" stroke="#1f3a57"/><use href="#bp"/></symbol>
    <symbol id="wmsadd" viewBox="0 0 24 24"><use href="#globeb"/><use href="#bp"/></symbol>
    <symbol id="wcsadd" viewBox="0 0 24 24"><circle cx="11" cy="10" r="10" fill="#24405f"/><path d="M1 7h20v6H1z" fill="#7ba3d6"/><path d="M1 10h20M11 0v20" stroke="#cfe0f2"/><use href="#bp"/></symbol>
    <symbol id="wfsadd" viewBox="0 0 24 24"><circle cx="11" cy="10" r="10" fill="#dce9f6" stroke="#7ba3d6"/><path d="M1 10h20M11 0v20" stroke="#a9c5e4"/><path d="M4 4l6 12 3-9 6-2" fill="none" stroke="#333"/><use href="#bp"/></symbol>

    <symbol id="brush" viewBox="0 0 24 24"><path d="M14 9l8-7 1 2-7 8z" fill="#b5813f"/><path d="M2 18c3-5 8-9 12-9l3 4c-1 5-8 8-15 5z" fill="#e9c35d"/><path d="M2 18c3 2 9 1 14-2l-3 5c-4 1-9 0-11-3z" fill="#c64a3a"/><path d="M5 12c2-2 5-3 9-3l-4 5z" fill="#4f83ba"/></symbol>
    <symbol id="groupadd" viewBox="0 0 24 24"><rect x="3" y="7" width="14" height="14" fill="#f5f5f2" stroke="#666"/><path d="M7 2h6v14H7z" fill="#dfe5ea" stroke="#666"/><path d="M8 4h4M8 7h4" stroke="#777"/><use href="#bp"/></symbol>
    <symbol id="eye" viewBox="0 0 24 24"><path d="M1 11c6-7 16-7 22 0-6 7-16 7-22 0z" fill="#e5e9ee" stroke="#999"/><circle cx="12" cy="11" r="5" fill="#5f8dc5" stroke="#333"/><circle cx="12" cy="11" r="2" fill="#222"/><path d="M17 20h6l-3 3z" fill="#444"/></symbol>
    <symbol id="filter" viewBox="0 0 24 24"><path d="M1 2h21l-8 9v10l-5-3v-7z" fill="#e9cf4b" stroke="#8b7314" stroke-width=".7"/><path d="M9 11h5v10l-5-3z" fill="#5f8dc5"/><path d="M17 20h6l-3 3z" fill="#444"/></symbol>
    <symbol id="epsilon" viewBox="0 0 24 24"><path d="M13 14h9l-1 8h-7z" fill="#cfcfc8"/></symbol>
    <symbol id="expand" viewBox="0 0 24 24"><path d="M2 3h6v6H2zM2 12h6v6H2z" fill="#fff" stroke="#888"/><rect x="3" y="4" width="3" height="3" fill="#e89b3c"/><rect x="3" y="13" width="3" height="3" fill="#e89b3c"/><path d="M12 1h6v12h4l-7 9-7-9h4z" fill="#5b8ec4" stroke="#35608d"/></symbol>
    <symbol id="collapse" viewBox="0 0 24 24"><path d="M2 6h6v6H2zM2 15h6v6H2z" fill="#fff" stroke="#888"/><rect x="3" y="7" width="3" height="3" fill="#e89b3c"/><rect x="3" y="16" width="3" height="3" fill="#e89b3c"/><path d="M12 22h6V10h4l-7-9-7 9h4z" fill="#5b8ec4" stroke="#35608d"/></symbol>
    <symbol id="remove" viewBox="0 0 24 24"><rect x="2" y="2" width="17" height="17" fill="#fff" stroke="#777"/><rect x="12" y="15" width="11" height="8" rx="1" fill="#e25b5b"/><path d="M14.500 19h6" stroke="#fff" stroke-width="2"/></symbol>
    <symbol id="models" viewBox="0 0 24 24"><circle cx="7" cy="7" r="5" fill="#c8191f"/><path d="M7 0v14M0 7h14M2 2l10 10M12 2L2 12" stroke="#c8191f" stroke-width="1.500"/><circle cx="15" cy="10" r="3" fill="#555"/><path d="M15 5v10M10 10h10" stroke="#555" stroke-width="1.300"/><circle cx="11" cy="18" r="3" fill="#6f9bcf"/><path d="M11 13v10M6 18h10" stroke="#6f9bcf" stroke-width="1.300"/><path d="M17 20h6l-3 3z" fill="#444"/></symbol>
    <symbol id="editflag" viewBox="0 0 24 24"><path d="M2 2h14v13l-5 5H2z" fill="#f3dc55" stroke="#b59a20"/><path d="M10 18l1-4 9-10 2 2-9 10z" fill="#d8c46a" stroke="#777" stroke-width=".6"/></symbol>
    <symbol id="wrench" viewBox="0 0 24 24"><path d="M2 4c3-3 7-2 8 1l13 13-3 4L8 9C5 10 1 8 2 4l3 3 2-1z" fill="#e0c562" stroke="#666" stroke-width=".8"/></symbol>
    <symbol id="gdal" viewBox="0 0 24 24"><circle cx="14" cy="9" r="7" fill="#6fb3d9"/><path d="M5 1l8 6M12 2L8 8" stroke="#333" stroke-width="1.500"/></symbol>

    <symbol id="dfloat" viewBox="0 0 12 12"><rect x=".5" y=".5" width="11" height="11" rx="1" fill="#eee" stroke="#777"/><rect x="4.500" y="2.500" width="5" height="5" fill="none" stroke="#444"/><rect x="2.500" y="4.500" width="5" height="5" fill="#eee" stroke="#444"/></symbol>
    <symbol id="dclose" viewBox="0 0 12 12"><rect x=".5" y=".5" width="11" height="11" rx="1" fill="#eee" stroke="#777"/><path d="M3 3l6 6M9 3l-6 6" stroke="#333" stroke-width="1.500"/></symbol>

    <symbol id="mouse" viewBox="0 0 16 18"><path d="M5 1c3-1 6 0 7 3l1 5-5 3-5-3z" fill="#fff" stroke="#222" stroke-width="1.200"/><path d="M6 1l2 6M2 5l9-2" stroke="#222"/><circle cx="11" cy="13" r="4" fill="#ddd" stroke="#222"/><path d="M9 11l4 4M13 11l-4 4" stroke="#222"/></symbol>
    <symbol id="lock" viewBox="0 0 14 20"><path d="M3 9V6a4 4 0 018 0v3" fill="none" stroke="#6b6b6b" stroke-width="2"/><rect x="1" y="9" width="12" height="10" rx="1" fill="#6b6b6b"/></symbol>
    <symbol id="wcsglobe" viewBox="0 0 14 14"><circle cx="7" cy="7" r="6.500" fill="#bfc5cc"/><path d="M.5 7h13M7 .5v13M2 3c3 2 7 2 10 0M2 11c3-2 7-2 10 0" stroke="#6b7079" fill="none"/></symbol>
    <symbol id="bubble" viewBox="0 0 16 18"><path d="M8 1c4 0 8 3 8 7s-4 7-8 7l-3 3v-3c-3-1-5-4-5-7 0-4 4-7 8-7z" fill="#666"/><circle cx="4.500" cy="8" r="1.200" fill="#fff"/><circle cx="8" cy="8" r="1.200" fill="#fff"/><circle cx="11.500" cy="8" r="1.200" fill="#fff"/></symbol>

    <symbol id="win" viewBox="0 0 20 20"><path d="M1 3.500l7.500-1v7H1zM9.500 2.300L19 1v8.500H9.500zM1 10.500h7.500v7l-7.500-1zM9.500 10.500H19V19l-9.500-1.300z" fill="#000"/></symbol>
    <symbol id="tsearch" viewBox="0 0 20 20"><circle cx="12" cy="8" r="6" fill="none" stroke="#111" stroke-width="1.300"/><path d="M8 12l-6 7" stroke="#111" stroke-width="1.500"/></symbol>
    <symbol id="taskview" viewBox="0 0 20 20"><path d="M2 1h11M2 19h11M2 5h11v10H2z" fill="none" stroke="#111" stroke-width="1.200"/><path d="M16 1h3v5h-3zM16 8h3v4h-3zM16 14h3v5h-3z" fill="#111"/></symbol>
    <symbol id="chrome" viewBox="0 0 24 24"><circle cx="12" cy="12" r="11" fill="#e23d2e"/><path d="M12 12L2.500 6.500A11 11 0 0012 23l5.500-9.500z" fill="#2ca24d"/><path d="M12 12l-2.500 11A11 11 0 0023 12H12z" fill="#fbc02d"/><circle cx="12" cy="12" r="5" fill="#fff"/><circle cx="12" cy="12" r="4" fill="#3c84e6"/></symbol>
    <symbol id="explorer" viewBox="0 0 24 24"><path d="M2 3h8l2 2h10v17H2z" fill="#f2c33d"/><path d="M2 8h20v5H2z" fill="#fbe08a"/><rect x="4" y="15" width="16" height="7" fill="#2b8fd8"/><rect x="9" y="17" width="6" height="5" fill="#f2c33d"/></symbol>
    <symbol id="cmd" viewBox="0 0 24 24"><rect x="1" y="3" width="22" height="18" rx="1" fill="#2b2b2b" stroke="#777"/><rect x="1" y="3" width="22" height="3" fill="#6a6a6a"/><path d="M3 9h4M8 9h2" stroke="#888" stroke-width="1.500"/></symbol>
    <symbol id="trayscreen" viewBox="0 0 16 16"><rect x="1" y="1" width="13" height="13" fill="#eee" stroke="#111" stroke-width="1.200"/><path d="M4 8l4-4M8 11l4-4" stroke="#111"/><circle cx="12" cy="13" r="3" fill="#e81123"/></symbol>
    <symbol id="traybat" viewBox="0 0 16 16"><path d="M3 1v4M6 1v4M2 5h5v3H2zM4.500 8v4" stroke="#111" fill="none"/><rect x="5" y="5" width="11" height="8" fill="#222"/></symbol>
    <symbol id="traywifi" viewBox="0 0 16 16"><path d="M2 14a12 12 0 0112-12M5 14a9 9 0 019-9M8 14a6 6 0 016-6" fill="none" stroke="#333" stroke-dasharray="1.500 1"/><circle cx="13" cy="13" r="1.500" fill="#111"/></symbol>
    <symbol id="traycam" viewBox="0 0 16 16"><rect x="2" y="2" width="9" height="12" rx="3" fill="none" stroke="#222"/><rect x="5" y="5" width="4" height="6" fill="none" stroke="#222"/><path d="M12 7l3-1v4l-3-1z" fill="#222"/></symbol>
    <symbol id="traysnd" viewBox="0 0 16 16"><path d="M1 5h3l4-3v12l-4-3H1z" fill="none" stroke="#222"/><path d="M10 5c1 2 1 4 0 6M12 3c2 3 2 7 0 10" fill="none" stroke="#222"/></symbol>
</svg>

</body>
</html>
```

FILE: styles.css
```css
html, body {
    margin: 0;
    padding: 0;
    height: 768px;
    overflow: hidden;
}
body {
    font-family: "Open Sans", "Noto Sans", sans-serif;
    font-size: 11.5px;
    letter-spacing: -0.15px;
    color: #111;
    background: #f0f0f0;
}
.sprite {
    display: block;
    width: 0;
    height: 0;
}
.ic {
    width: 24px;
    height: 24px;
    display: block;
}

/* text inside icons */
.it {
    font-family: "Liberation Sans", sans-serif;
    font-weight: 700;
    font-size: 8.5px;
    letter-spacing: 0;
    fill: #222;
}
.it.g { fill: #bbb; }
.it.r { fill: #e81d25; }
.it.plain {
    font-size: 11px;
    font-weight: 400;
    fill: #444;
}
.it.info {
    font-family: "Liberation Serif", serif;
    font-style: italic;
    font-size: 14px;
    fill: #fff;
}
.it.q {
    font-size: 13px;
    font-weight: 400;
    fill: #fff;
}
.it.eps {
    font-family: "Liberation Serif", serif;
    font-size: 21px;
    font-weight: 400;
    fill: #6f3a8a;
}
.it.gd {
    font-size: 8px;
}

/* window title */
.titlebar {
    height: 23px;
    background: #fff;
    display: flex;
    align-items: center;
}
.logo {
    width: 18px;
    height: 18px;
    margin-left: 2px;
}
.title {
    margin-left: 3px;
    font-size: 12px;
    letter-spacing: -0.25px;
}
.winbtns {
    margin-left: auto;
    margin-right: 2px;
    display: flex;
    height: 23px;
}
.winbtns svg {
    width: 46px;
    height: 23px;
}

/* menu */
.menubar {
    height: 19px;
    padding-left: 10px;
    display: flex;
    gap: 14px;
    align-items: center;
    background: #f0f0f0;
    border-bottom: 1px solid #d4d4d4;
    font-size: 11.5px;
    letter-spacing: -0.13px;
}

/* toolbars */
.toolbar {
    height: 38px;
    display: flex;
    align-items: center;
    background: linear-gradient(#fafafa, #efefef);
    border-bottom: 1px solid #b5b5b5;
}
.toolbar.last {
    height: 37px;
}
.b {
    width: 33px;
    height: 31px;
    flex: none;
    display: flex;
    align-items: center;
    justify-content: center;
    box-sizing: border-box;
}
.b.on {
    background: #d9d9d9;
    border: 1px solid #a8a8a8;
    border-radius: 2px;
}
.hd {
    width: 6px;
    height: 24px;
    flex: none;
    margin: 0 2px 0 8px;
    background-image: radial-gradient(circle, #b0b0b0 .8px, transparent 1px);
    background-size: 3px 3px;
}
.hd.first {
    margin: 0 2px 0 4px;
}
.ar {
    width: 12px;
    height: 5px;
    flex: none;
    position: relative;
}
.ar::after {
    content: "";
    position: absolute;
    left: 1px;
    top: 0;
    border-left: 4px solid transparent;
    border-right: 4px solid transparent;
    border-top: 5px solid #555;
}
.ar.off::after {
    border-top-color: #bbb;
}
.sp {
    width: 8px;
    height: 24px;
    flex: none;
    position: relative;
}
.sp::after {
    content: "";
    position: absolute;
    left: 4px;
    top: 2px;
    bottom: 2px;
    width: 1px;
    background: #cfcfcf;
}
.sp.narrow {
    width: 4px;
}
.sp.narrow::after {
    left: 2px;
}
.gap46 { width: 46px; flex: none; }
.gap60 { width: 60px; flex: none; }
.gap147 { width: 147px; flex: none; }
.gap34 { width: 34px; flex: none; }
.more {
    margin-left: 17px;
    font-size: 15px;
    color: #555;
}
.snapbtn {
    width: 33px;
    height: 31px;
    flex: none;
    display: flex;
    align-items: center;
    justify-content: center;
    box-sizing: border-box;
    background: #dcdcdc;
    border: 1px solid #c4c4c4;
    border-radius: 2px;
    margin-right: 1px;
}

/* spin boxes and combos */
.spin, .combo, .field {
    height: 21px;
    box-sizing: border-box;
    background: #fff;
    border: 1px solid #bcbcbc;
    border-radius: 2px;
    display: flex;
    align-items: center;
    flex: none;
    position: relative;
}
.val {
    padding-left: 4px;
}
.w80 { width: 80px; }
.w83 { width: 83px; }
.w99 { width: 99px; padding-left: 5px; }
.spin.dim, .combo.dim {
    background: #ececec;
    color: #666;
    margin-right: 2px;
}
.spin.dim {
    width: 83px;
}
.combo.dim {
    width: 103px;
    margin-right: 1px;
}
.combo.dim::after, .drop::after {
    content: "";
    position: absolute;
    right: 5px;
    top: 7px;
    border-left: 4px solid transparent;
    border-right: 4px solid transparent;
    border-top: 5px solid #777;
}
.drop {
    position: absolute;
    right: 0;
    top: 0;
    bottom: 0;
    width: 19px;
    border-left: 1px solid #ccc;
}
.updown {
    position: absolute;
    right: 0;
    top: 0;
    bottom: 0;
    width: 14px;
    border-left: 1px solid #ccc;
}
.updown::before, .updown::after {
    content: "";
    position: absolute;
    left: 3px;
    border-left: 4px solid transparent;
    border-right: 4px solid transparent;
}
.updown::before {
    top: 3px;
    border-bottom: 4px solid #666;
}
.updown::after {
    bottom: 3px;
    border-top: 4px solid #666;
}

/* main area */
.main {
    height: 502px;
    display: flex;
}
.lefttools {
    width: 51px;
    flex: none;
    border-right: 1px solid #b5b5b5;
    background: linear-gradient(90deg, #f0f0f0, #f6f6f6);
    position: relative;
}
.hdh {
    height: 12px;
    margin: 0 14px;
    background-image: radial-gradient(circle, #b0b0b0 .8px, transparent 1px);
    background-size: 3px 3px;
    background-position: 0 3px;
    background-repeat: repeat-x;
}
.lb {
    height: 32px;
    padding-left: 9px;
    display: flex;
    align-items: center;
}
.lar {
    position: absolute;
    left: 38px;
    margin-top: -18px;
}
.layers {
    width: 385px;
    flex: none;
    display: flex;
    flex-direction: column;
}
.procs {
    width: 215px;
    flex: none;
    display: flex;
    flex-direction: column;
}
.split {
    width: 5px;
    flex: none;
}
.dockhead {
    height: 20px;
    flex: none;
    padding: 0 2px 0 5px;
    display: flex;
    align-items: center;
    gap: 2px;
    white-space: nowrap;
}
.dockhead span {
    margin-right: auto;
}
.dockbtn {
    width: 12px;
    height: 12px;
    flex: none;
}
.docktools {
    height: 31px;
    box-sizing: border-box;
    padding: 0 0 1px 3px;
    flex: none;
    display: flex;
    align-items: center;
}
.sb {
    width: 25px;
    height: 24px;
    flex: none;
    display: flex;
    align-items: center;
    justify-content: center;
}
.sb .ic {
    width: 18px;
    height: 18px;
}
.sar {
    width: 11px;
}
.tree {
    flex: 1;
    background: #fff;
    border: 1px solid #a8a8a8;
    margin: 0 1px 0 1px;
}
.lrow {
    height: 18px;
    display: flex;
    align-items: center;
    font-weight: 700;
    font-size: 11.5px;
    letter-spacing: -0.1px;
    padding-left: 23px;
}
.lrow.sel {
    background: #0f7dd8;
    color: #fff;
    text-decoration: underline;
}
.cb {
    width: 13px;
    height: 13px;
    flex: none;
    box-sizing: border-box;
    background: #fff;
    border: 1px solid #999;
    margin-right: 6px;
    position: relative;
}
.cb::after {
    content: "";
    position: absolute;
    left: 3.500px;
    top: 0;
    width: 3px;
    height: 8px;
    border: solid #000;
    border-width: 0 2px 2px 0;
    transform: rotate(40deg);
}
.sym {
    flex: none;
    margin-right: 6px;
}
.sym.line {
    width: 14px;
    height: 2px;
    margin-right: 6px;
}
.sym.red { background: #e8414e; }
.sym.blue { background: #5140c8; }
.sym.box {
    width: 16px;
    height: 16px;
    box-sizing: border-box;
}
.sym.grey { background: #c8c8c8; border: 1px solid #8a8a8a; }
.sym.purple { background: #9b7bb5; border: 1px solid #665a70; }
.tabs {
    height: 24px;
    flex: none;
    display: flex;
    padding-left: 1px;
    align-items: flex-start;
}
.tab {
    width: 76px;
    height: 20px;
    line-height: 20px;
    text-align: center;
    background: #dedede;
    border: 1px solid #b5b5b5;
    box-sizing: content-box;
}
.tab.cur {
    width: 52px;
    height: 22px;
    line-height: 22px;
    background: #fafafa;
    border-top: 0;
}
.canvas {
    width: 702px;
    flex: none;
    height: 500px;
    background: #fff;
    border: 1px solid #a8a8a8;
}
.canvas svg {
    display: block;
    width: 702px;
    height: 500px;
}
.route {
    fill: none;
    stroke-width: 1;
}
.search {
    height: 21px;
    flex: none;
    box-sizing: border-box;
    margin: 0 0 1px 1px;
    background: #fff;
    border: 1px solid #bbb;
    border-radius: 2px;
    display: flex;
    align-items: center;
    padding-left: 5px;
    color: #666;
}
.search svg {
    width: 14px;
    height: 14px;
    margin-right: 8px;
    flex: none;
}
.locator svg {
    width: 14px;
    height: 14px;
    margin-right: 6px;
    flex: none;
}
.ptree {
    border-right: 0;
    margin: 0 0 3px 1px;
    flex: 1;
}
.prow {
    height: 18px;
    display: flex;
    align-items: center;
    font-size: 11.5px;
    padding-left: 8px;
}
.tri {
    width: 0;
    height: 0;
    flex: none;
    border-top: 4px solid transparent;
    border-bottom: 4px solid transparent;
    border-left: 4px solid #555;
    margin-right: 11px;
}
.pic {
    width: 16px;
    height: 16px;
    flex: none;
    margin-right: 6px;
}

/* status bar */
.statusbar {
    height: 28px;
    display: flex;
    align-items: center;
    background: #f0f0f0;
    padding-left: 4px;
    font-size: 11px;
    letter-spacing: -0.25px;
}
.locator {
    width: 253px;
    height: 21px;
    flex: none;
    box-sizing: border-box;
    background: #fff;
    border: 1px solid #bbb;
    border-radius: 2px;
    display: flex;
    align-items: center;
    padding-left: 7px;
    color: #666;
}
.msg {
    width: 249px;
    margin-left: 7px;
    flex: none;
}
.lab {
    flex: none;
}
.w62 { width: 62px; }
.w35 { width: 35px; }
.w63 { width: 63px; }
.w52 { width: 52px; margin-left: 8px; }
.w78 { width: 78px; }
.w83px { width: 80px; }
.stic {
    width: 16px;
    height: 18px;
    flex: none;
    margin: 0 7px;
}
.first-ic {
    margin: 0 12px 0 4px;
}
.lock {
    margin: 0 7px 0 11px;
    width: 14px;
}
.globe {
    width: 14px;
    height: 14px;
    margin: 0 2px 0 0;
}
.cb.small {
    margin: 0 4px 0 8px;
}
.statusbar > .stic:last-child {
    margin-left: 3px;
}

/* taskbar */
.taskbar {
    height: 40px;
    display: flex;
    align-items: center;
    background: linear-gradient(90deg, #cfe4ee, #d3e0ec);
    font-family: "Open Sans", sans-serif;
    letter-spacing: 0;
    color: #222;
}
.tk {
    height: 40px;
    flex: none;
    box-sizing: border-box;
    display: flex;
    align-items: center;
    justify-content: center;
}
.tk.w46 { width: 46px; }
.tk.w49 { width: 49px; }
.tk.w50 { width: 50px; }
.tk.w48 { width: 48px; }
.tk.run {
    border-bottom: 2px solid #0f74c8;
    border-left: 4px solid transparent;
    border-right: 4px solid transparent;
    background-clip: padding-box;
}
.tk.active {
    background: #e8f2f7;
    border-left: 0;
    border-right: 0;
}
.tkic {
    width: 20px;
    height: 20px;
}
.tkic.big {
    width: 26px;
    height: 26px;
}
.addr {
    margin-left: 233px;
    width: 56px;
    flex: none;
}
.addrbox {
    width: 231px;
    height: 30px;
    flex: none;
    background: #fff;
    display: flex;
    align-items: center;
    justify-content: flex-end;
    position: relative;
}
.chev {
    width: 10px;
    height: 6px;
    margin-right: 11px;
}
.addrgo {
    width: 29px;
    height: 30px;
    line-height: 28px;
    text-align: center;
    font-size: 16px;
    color: #777;
    border-left: 1px solid #ddd;
}
.sun {
    width: 20px;
    height: 20px;
    flex: none;
    border-radius: 50%;
    margin-left: 72px;
    background: radial-gradient(circle at 50% 30%, #ffc000, #f08a00);
}
.weather {
    margin-left: 12px;
    width: 100px;
    flex: none;
    font-size: 13px;
    color: #333;
}
.tray {
    width: 16px;
    height: 16px;
    flex: none;
    margin-right: 9px;
}
.tray.up {
    width: 14px;
    height: 14px;
    margin-right: 10px;
}
.lang {
    width: 25px;
    flex: none;
}
.clock {
    width: 74px;
    flex: none;
    display: flex;
    flex-direction: column;
    align-items: center;
    line-height: 18px;
}
.notif {
    margin-left: 8px;
    width: 30px;
    height: 30px;
    flex: none;
    position: relative;
}
.notif svg {
    width: 17px;
    height: 19px;
    display: block;
    margin: 6px 0 0 3px;
}
.count {
    position: absolute;
    right: 3px;
    bottom: 0;
    width: 12px;
    height: 12px;
    line-height: 12px;
    border-radius: 50%;
    text-align: center;
    font-size: 9px;
    background: #a9b4bb;
    border: 1px solid #333;
}
```
